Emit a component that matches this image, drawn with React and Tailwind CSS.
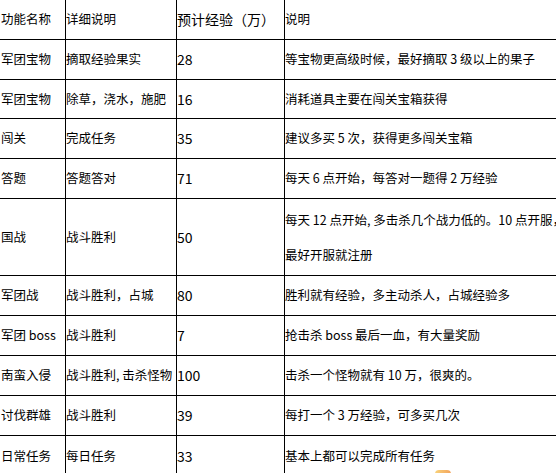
import React from "react";

const rows = [
  { name: "军团宝物", detail: "摘取经验果实", exp: "28", note: "等宝物更高级时候，最好摘取 3 级以上的果子", h: "h-10" },
  { name: "军团宝物", detail: "除草，浇水，施肥", exp: "16", note: "消耗道具主要在闯关宝箱获得", h: "h-[39px]" },
  { name: "闯关", detail: "完成任务", exp: "35", note: "建议多买 5 次，获得更多闯关宝箱", h: "h-10" },
  { name: "答题", detail: "答题答对", exp: "71", note: "每天 6 点开始，每答对一题得 2 万经验", h: "h-10" },
  {
    name: "国战",
    detail: "战斗胜利",
    exp: "50",
    note: ["每天 12 点开始, 多击杀几个战力低的。10 点开服，", "最好开服就注册"],
    h: "h-[77px]",
  },
  { name: "军团战", detail: "战斗胜利，占城", exp: "80", note: "胜利就有经验，多主动杀人，占城经验多", h: "h-10" },
  { name: "军团 boss", detail: "战斗胜利", exp: "7", note: "抢击杀 boss 最后一血，有大量奖励", h: "h-10" },
  { name: "南蛮入侵", detail: "战斗胜利, 击杀怪物", exp: "100", note: "击杀一个怪物就有 10 万，很爽的。", h: "h-10" },
  { name: "讨伐群雄", detail: "战斗胜利", exp: "39", note: "每打一个 3 万经验，可多买几次", h: "h-10" },
  { name: "日常任务", detail: "每日任务", exp: "33", note: "基本上都可以完成所有任务", h: "h-10" },
];

function Row({ name, detail, exp, note, h, last }) {
  return (
    <div className={`grid grid-cols-[66px_111px_108px_1fr] ${h} ${last ? "" : "border-b border-black"}`}>
      <div className="flex items-center pl-px border-r border-black whitespace-nowrap">{name}</div>
      <div className="flex items-center border-r border-black whitespace-nowrap">{detail}</div>
      <div className="flex items-center border-r border-black whitespace-nowrap text-[14px]">{exp}</div>
      <div className="flex items-center whitespace-nowrap">
        {Array.isArray(note) ? (
          <div className="leading-[35.5px]">
            {note.map((line) => (
              <div key={line}>{line}</div>
            ))}
          </div>
        ) : (
          note
        )}
      </div>
    </div>
  );
}

export default function App() {
  return (
    <div
      className="relative w-[556px] h-[473px] overflow-hidden bg-white text-black text-[12.5px]"
      style={{ fontFamily: '"Noto Sans CJK SC", "Noto Sans", sans-serif' }}
    >
      <Row name="功能名称" detail="详细说明" exp="预计经验（万）" note="说明" h="h-10" />
      {rows.map((r, i) => (
        <Row key={i} {...r} last={i === rows.length - 1} />
      ))}
      <span className="absolute left-[435px] top-[470px] w-4 h-1 rounded-t-full bg-gradient-to-r from-[#f8d27a] to-[#f3a45c]" />
    </div>
  );
}
